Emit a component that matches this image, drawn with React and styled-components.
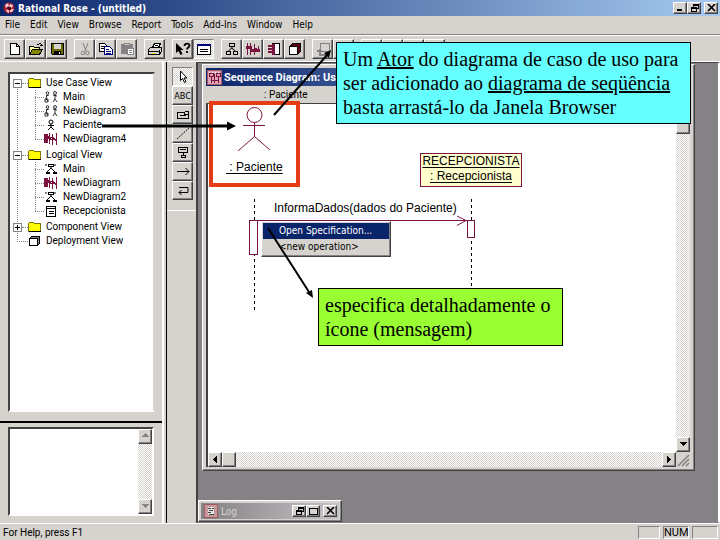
import styled, { createGlobalStyle, css } from 'styled-components';

const face = '#d6d3ce';
const shadow = '#848284';
const dark = '#424142';
const maroon = '#7b1340';
const ui = '"Roboto", "Liberation Sans", sans-serif';
const condensed = '"DejaVu Sans Condensed", "DejaVu Sans", sans-serif';

const GlobalStyle = createGlobalStyle`
    * {
        box-sizing: border-box;
    }

    body {
        margin: 0;
        background: ${face};
        font-family: ${ui};
        font-size: 10px;
        color: #000;
    }

    ul {
        list-style: none;
        margin: 0;
        padding: 0;
    }

    svg {
        display: block;
        flex: none;
    }
`;

const checker = css`
    background: repeating-conic-gradient(#fff 0 25%, ${face} 0 50%) 0 0 / 2px 2px;
`;

const raised = css`
    border: 1px solid;
    border-color: #fff ${dark} ${dark} #fff;
    box-shadow: inset -1px -1px 0 ${shadow};
`;

/* ---------- icons ---------- */

const Icon = ({ w = 16, h = 14, children, ...rest }) => (
    <svg width={w} height={h} viewBox={`0 0 ${w} ${h}`} fill="none" stroke="#000" shapeRendering="crispEdges" aria-hidden="true" {...rest}>
        {children}
    </svg>
);

const RoseIcon = () => (
    <Icon w={12} h={12} shapeRendering="auto" stroke="none">
        <circle cx="6" cy="6" r="5.500" fill="#a02030" />
        <path d="M2 3l3-2 1 3-3 2zM7 2l3 1-1 3-3-1zM7 7l4 0-2 3-2 0zM3 8l3-1 0 4-2-1z" fill="#f4c8cc" />
        <path d="M4 5h4v3H5z" fill="#5a0010" />
    </Icon>
);

const SequenceWindowIcon = () => (
    <Icon w={15} h={15} stroke={maroon}>
        <path d="M.5.500h14v14H.500z" fill="#dea6b5" stroke="#a55a63" />
        <path d="M2.500 3.500h4v3h-4zM9.500 3.500h4v3h-4zM4.500 7v6M11.500 7v6M4 10.500h8M7.500 4v9" />
        <path d="M2 2.500h11" stroke="#fff" strokeDasharray="1 2" />
    </Icon>
);

const toolIcons = {
    new: <Icon><path d="M3.500 1.500h6l3 3v8h-9zM9.500 1.500v3h3" fill="#fff" /></Icon>,
    open: (
        <Icon>
            <path d="M1.500 12V4.500h4l1 1h5V7" fill="#ffff9c" />
            <path d="M1.500 12.500l3-5h10l-3 5z" fill="#848200" />
            <path d="M9 2.500h2M11 1.500h2M13.500 2v2M12 3.500h3" />
        </Icon>
    ),
    save: (
        <Icon>
            <path d="M2.500 1.500h12v11h-11l-1-1z" fill="#6b6900" />
            <path d="M5 2h7v5H5z" fill={face} stroke="none" />
            <path d="M5 9h7v4H5z" fill="#000" stroke="none" />
            <path d="M10 10h1v2h-1z" fill="#fff" stroke="none" />
        </Icon>
    ),
    cut: (
        <Icon stroke={shadow} shapeRendering="auto">
            <path d="M6 1l3 8M11 1l-3 8" />
            <circle cx="6" cy="11" r="1.800" />
            <circle cx="10.500" cy="11" r="1.800" />
        </Icon>
    ),
    copy: (
        <Icon>
            <path d="M1.500 1.500h5l2 2v6h-7z" fill="#fff" />
            <path d="M3 4.500h3M3 6.500h4" />
            <path d="M6.500 4.500h5l3 3v5h-8z" fill="#fff" stroke="#00007b" />
            <path d="M8 7.500h3M8 9.500h5M8 11.500h5" stroke="#00007b" />
        </Icon>
    ),
    paste: (
        <Icon stroke={shadow}>
            <path d="M2.500 2.500h11v9h-11z" fill={shadow} />
            <path d="M5.500 1.500h5v2h-5z" fill={face} />
            <path d="M8.500 6.500h6v6h-6z" fill="#fff" />
            <path d="M10 8.500h3M10 10.500h3" />
        </Icon>
    ),
    print: (
        <Icon>
            <path d="M5.500 5.500l2-4h6l-2 4z" fill="#fff" />
            <path d="M1.500 7.500l2-2h11v4l-2 3h-11z" fill={face} />
            <path d="M2 9.500h10M12.500 12V8M8 3.500h3" />
            <path d="M5 11h3" stroke="#ffff00" />
        </Icon>
    ),
    help: (
        <Icon shapeRendering="auto">
            <path d="M1 1v10l2.500-2 2 4 2-1-2-4h3z" fill="#000" stroke="none" />
            <path d="M9.500 4c0-3 5-3 5-.500 0 2-2.500 2-2.500 4M12 9v2" strokeWidth="1.800" />
        </Icon>
    ),
    docs: (
        <Icon>
            <path d="M1.500 2.500h13v10h-13z" fill="#fff" />
            <path d="M1 3.500h14M1 2.500h14" stroke="#00007b" />
            <path d="M4 7.500h8M4 9.500h8" />
        </Icon>
    ),
    classes: (
        <Icon>
            <path d="M5.500 1.500h5v3h-5zM2.500 9.500h4v3h-4zM9.500 9.500h4v3h-4z" />
            <path d="M8 5v2M4.500 9l3-3 4 3" shapeRendering="auto" />
        </Icon>
    ),
    interaction: (
        <Icon stroke={maroon}>
            <path d="M2.500 1v12M5.500 1v12M9.500 2v11M13.500 4v6" />
            <path d="M1 5h6M6 8h9M10 6v4" strokeWidth="3" />
        </Icon>
    ),
    component: (
        <Icon>
            <path d="M6.500 1.500h7v11h-7z" fill="#fff" />
            <path d="M6 2h3v11H6z" fill={maroon} stroke="none" />
            <path d="M2.500 3.500h5v1h-5zM2.500 6.500h5v1h-5zM2.500 9.500h5v1h-5z" fill="#fff" stroke={maroon} />
        </Icon>
    ),
    deployment: (
        <Icon>
            <path d="M2.500 4.500l3-3h8v8l-3 3z" fill="#5a0010" />
            <path d="M2.500 4.500h8v8h-8z" fill="#fff" />
        </Icon>
    ),
    parent: (
        <Icon stroke={shadow}>
            <path d="M5.500 1.500h9v8h-9z" />
            <path d="M4.500 12V7M2 8.500h5M4 12.500h7v-2" strokeWidth="2" />
        </Icon>
    ),
    previous: <Icon><path d="M3 1.500h10M3.500 1v10M13.500 1v10" strokeWidth="2" /></Icon>,
    zoom: <Icon stroke={shadow}><path d="M5 2.500h5M4.500 3v5M10.500 3v5" /></Icon>,
    fit: <Icon><path d="M3 2.500h10v9H3z" /></Icon>,
};

const paletteIcons = {
    select: <Icon w={14} h={13}><path d="M4.500 1v9.500l2-2 2 4 1.500-1-2-3.500h3z" fill="#fff" shapeRendering="auto" /></Icon>,
    note: <Icon w={14} h={13}><path d="M1.500 4.500h7l1-1h3v7h-11zM4 7.500h6M8.500 4.500v2h3" /></Icon>,
    anchor: <Icon w={14} h={13}><path d="M1 12L13 1" strokeDasharray="2 1" shapeRendering="auto" /></Icon>,
    object: <Icon w={14} h={13}><path d="M2.500 1.500h9v5h-9zM4 3.500h6M7.500 7v2M5.500 9.500h4v2h-4z" /></Icon>,
    message: <Icon w={14} h={13}><path d="M1 6.500h12M9.500 3l3.500 3.500-3.500 3.500" shapeRendering="auto" /></Icon>,
    self: <Icon w={14} h={13}><path d="M3 3.500h9v5H3M5.500 6L3 8.500 5.500 11" shapeRendering="auto" /></Icon>,
};

const treeIcons = {
    folder: (
        <Icon w={13} h={12} stroke="#7b7900">
            <path d="M.5 10.500v-8l1-1h4l1 1h6v8z" fill="#ffff00" />
            <path d="M1 10.500h12" stroke="#000" />
        </Icon>
    ),
    usecase: (
        <Icon w={14} h={12} shapeRendering="auto" strokeWidth=".8">
            <circle cx="3.500" cy="2" r="1.300" />
            <circle cx="11" cy="2" r="1.500" />
            <path d="M2 5l3-1M3 4L2 8l2 2M1 8h3v3H1zM9 4l4 1M11 4v4l-2 3M11 8l2 3" />
        </Icon>
    ),
    actor: (
        <Icon w={14} h={12} shapeRendering="auto">
            <circle cx="7" cy="3" r="2" />
            <path d="M4 6.500h6M7 5v3l-3 3M7 8l3 3" />
        </Icon>
    ),
    sequence: (
        <Icon w={14} h={12} stroke={maroon}>
            <path d="M0 1h4v9H0z" fill={maroon} stroke="none" />
            <path d="M5.500 0v11M8.500 1v11M12.500 0v12M1 4.500h8M6 6.500h7" />
            <path d="M4 4l3 3M9 5l4 3" strokeWidth="2" />
        </Icon>
    ),
    classes: (
        <Icon w={14} h={12}>
            <path d="M4.500 1.500h5v2h-5zM2.500 9.500h3v1h-3zM9.500 9.500h3v1h-3z" />
            <path d="M7 4v2M3 9l4-4 4 4M2 1v2M11 1v2" shapeRendering="auto" />
        </Icon>
    ),
    class: <Icon w={14} h={12}><path d="M2.500 1.500h9v10h-9zM2 3.500h10M5 6.500h5M5 8.500h5" fill="#fff" /></Icon>,
    deployment: (
        <Icon w={13} h={12}>
            <path d="M1.500 3.500l2-2h8v7l-2 2z" fill={shadow} />
            <path d="M1.500 3.500h8v7h-8z" fill="#fff" />
        </Icon>
    ),
};

const captionIcons = {
    min: <Icon w={9} h={8}><path d="M1 6h5" strokeWidth="2" /></Icon>,
    restore: <Icon w={9} h={8}><path d="M3.500 3V.500h5v4H6M3 1h6M1.500 3.500h5v4h-5zM1 4h6" /></Icon>,
    max: <Icon w={9} h={8}><path d="M.5 1.500h8v6h-8zM0 1h9" /></Icon>,
    close: <Icon w={9} h={8}><path d="M1 0l7 7M8 0L1 7" strokeWidth="1.600" shapeRendering="auto" /></Icon>,
};

/* ---------- window frame ---------- */

const Page = styled.div`
    position: relative;
    display: flex;
    flex-direction: column;
    min-height: 100vh;
    overflow: hidden;
`;

const TitleBar = styled.header`
    display: flex;
    align-items: center;
    gap: 3px;
    height: 16px;
    padding: 0 2px 0 3px;
    background: linear-gradient(90deg, ${(p) => (p.$inactive ? '#848284, #c6c3c6' : '#0a246a, #a6caf0')});
    color: ${(p) => (p.$inactive ? face : '#fff')};
    font-family: ${condensed};
    font-size: 10px;
    font-weight: ${(p) => (p.$inactive ? 400 : 700)};
    white-space: nowrap;

    ${(p) => p.$child && css`
        height: 18px;
        padding-left: 1px;
        gap: 2px;
        font-family: ${ui};
        font-size: 11px;
    `}
`;

const Caption = styled.h1`
    flex: 1;
    margin: 0;
    font: inherit;
`;

const CaptionButton = styled.button`
    ${raised}
    display: grid;
    place-items: center;
    width: 14px;
    height: 12px;
    margin: 0 0 0 ${(p) => (p.$apart ? '0' : '-3px')};
    padding: 0;
    background: ${face};
`;

const MenuBar = styled.nav`
    display: flex;
    gap: 10px;
    height: 19px;
    padding-left: 5px;
    border-bottom: 1px solid ${shadow};
`;

const MenuItem = styled.button`
    padding: 0;
    border: 0;
    background: none;
    font: 10px/16px ${condensed};
`;

const ToolBar = styled.div`
    display: flex;
    align-items: center;
    gap: 7px;
    height: 27px;
    padding-left: 4px;
    border-top: 1px solid #fff;
    border-bottom: 1px solid #fff;
`;

const ToolGroup = styled.div`
    display: flex;
`;

const ToolButton = styled.button`
    ${raised}
    display: grid;
    place-items: center;
    width: 21px;
    height: ${(p) => (p.$palette ? '19px' : '20px')};
    padding: 0;
    background: ${face};
    font: 9px ${condensed};

    ${(p) => p.$pressed && css`
        ${checker}
        border-color: ${shadow} #fff #fff ${shadow};
        box-shadow: none;
    `}
`;

const Workspace = styled.main`
    flex: 1;
    display: flex;
`;

const StatusBar = styled.footer`
    display: flex;
    align-items: center;
    gap: 3px;
    height: 17px;
    padding: 0 2px 0 3px;
    border-top: 1px solid #fff;
    font-size: 10px;
`;

const StatusText = styled.span`
    flex: 1;
`;

const StatusPane = styled.span`
    width: ${(p) => p.$width}px;
    height: 13px;
    border: 1px solid;
    border-color: ${shadow} #fff #fff ${shadow};
    font-size: 11px;
    line-height: 12px;
    text-align: center;
`;

/* ---------- browser side ---------- */

const Side = styled.aside`
    display: flex;
    flex-direction: column;
    width: 167px;
    border-right: 1px solid #000;
    box-shadow: inset -2px 0 0 ${face}, inset -4px 0 0 #fff;
`;

const Sunken = styled.div`
    border: 2px solid;
    border-color: ${dark} #fff #fff ${dark};
    background: #fff;
`;

const BrowserPane = styled.section`
    flex: 1;
    display: flex;
    padding: 10px 7px 9px 8px;
    border-bottom: 2px solid #000;
    margin-right: 4px;
`;

const TreeBox = styled(Sunken)`
    flex: 1;
    padding-top: 2px;
    border-right-color: ${face};
    font-size: 10px;
`;

const dots = 'repeating-linear-gradient(#848284 0 1px, transparent 1px 2px)';

const Tree = styled.ul`
    display: flex;
    flex-direction: column;
    gap: 2px;
    background: ${dots} 7px 7px / 1px calc(100% - 14px) no-repeat;
`;

const Branch = styled.ul`
    padding-left: 25px;
    background: ${dots} 25px 0 / 1px calc(100% - 7px) no-repeat;
`;

const TreeRow = styled.div`
    display: flex;
    align-items: center;
    height: 14px;
    padding-left: ${(p) => p.$indent || 0}px;
    line-height: 14px;
    white-space: nowrap;
`;

const Leader = styled.span`
    flex: none;
    width: ${(p) => p.$width}px;
    border-top: 1px dotted ${shadow};
`;

const TreeLabel = styled.span`
    padding-left: 5px;
`;

const Expander = styled.button`
    flex: none;
    display: block;
    width: 9px;
    height: 9px;
    padding: 0;
    border: 1px solid ${shadow};
    background: #fff;
`;

const DocPane = styled.section`
    padding: 4px 12px 7px 8px;
`;

const DocBox = styled(Sunken)`
    display: flex;
    height: 89px;
`;

const DocText = styled.textarea`
    flex: 1;
    min-width: 0;
    border: 0;
    padding: 2px;
    resize: none;
    overflow: hidden;
    outline: none;
    font: inherit;
`;

const Track = styled.div`
    ${checker}
    display: flex;
    flex-direction: ${(p) => (p.$across ? 'row' : 'column')};
    flex: ${(p) => (p.$across ? '1' : 'none')};
`;

const ScrollButton = styled.button`
    ${raised}
    display: grid;
    place-items: center;
    width: 14px;
    height: 15px;
    padding: 0;
    background: ${face};
    ${(p) => p.$end && (p.$across ? 'margin-left: auto;' : 'margin-top: auto;')}
`;

const Thumb = styled.div`
    ${raised}
    width: 14px;
    height: 15px;
    background: ${face};
`;

const PaletteColumn = styled.div`
    width: 29px;
`;

const Palette = styled.div`
    display: flex;
    flex-direction: column;
    padding: 5px 4px 10px 5px;
    border-bottom: 1px solid #fff;
`;

/* ---------- mdi area ---------- */

const Desktop = styled.section`
    position: relative;
    flex: 1;
    min-width: 0;
    background: ${shadow};
    border: solid;
    border-width: 1px 2px 1px 2px;
    border-color: ${dark} #fff ${shadow} ${dark};
`;

const ChildWindow = styled.article`
    position: absolute;
    inset: 1px 23px 51px 4px;
    display: flex;
    flex-direction: column;
    padding: 3px 4px 3px 3px;
    ${raised}
    background: ${face};
`;

const ObjectStrip = styled.div`
    height: 18px;
    padding-left: 58px;
    line-height: 18px;
    border-bottom: 1px solid ${dark};
`;

const CanvasRow = styled.div`
    flex: 1;
    display: flex;
    border-left: 2px solid ${dark};
`;

const Canvas = styled.div`
    position: relative;
    flex: 1;
    overflow: hidden;
    background: #fff;
    font: 12px/14px "Liberation Sans", sans-serif;
`;

const BottomRow = styled.div`
    display: flex;
    border-left: 2px solid ${dark};
`;

const Label = styled.span`
    position: absolute;
    left: ${(p) => p.$x}px;
    top: ${(p) => p.$y}px;
    white-space: pre;
    text-decoration: ${(p) => (p.$underline ? 'underline' : 'none')};
    text-underline-offset: 2px;
`;

const ObjectBox = styled.div`
    position: absolute;
    left: 212px;
    top: 49px;
    width: 102px;
    height: 34px;
    border: 1px solid ${maroon};
    background: #ffffce;
    line-height: 15px;
    text-align: center;
    text-decoration: underline;
    text-underline-offset: 2px;
    white-space: nowrap;
`;

const Lines = styled.svg`
    position: absolute;
    left: 0;
    top: 0;
`;

const ContextMenu = styled.div`
    position: absolute;
    left: 53px;
    top: 117px;
    display: flex;
    flex-direction: column;
    width: 130px;
    padding: 1px;
    ${raised}
    background: ${face};
`;

const ContextItem = styled.button`
    height: 16px;
    padding: 0 0 0 16px;
    border: 0;
    background: ${(p) => (p.$active ? '#0a246a' : 'none')};
    color: ${(p) => (p.$active ? '#fff' : '#000')};
    font: 10px/16px ${condensed};
    text-align: left;
`;

const LogWindow = styled.article`
    position: absolute;
    left: 0;
    bottom: 0;
    width: 144px;
    padding: 2px;
    ${raised}
    background: ${face};
`;

/* ---------- notes drawn over the screen ---------- */

const Note = styled.p`
    position: absolute;
    left: ${(p) => p.$x}px;
    top: ${(p) => p.$y}px;
    margin: 0;
    padding: 4px 12px 4px 6px;
    border: 1px solid #000;
    background: ${(p) => p.$color};
    font: 20px/24px "Liberation Serif", serif;
    white-space: nowrap;
`;

const Highlight = styled.div`
    position: absolute;
    left: 209px;
    top: 101px;
    width: 91px;
    height: 86px;
    border: 4px solid #e63c14;
`;

const toolGroups = [
    ['new', 'open', 'save'],
    ['cut', 'copy', 'paste'],
    ['print'],
    ['help', 'docs'],
    ['classes', 'interaction', 'component', 'deployment'],
    ['parent', 'previous'],
    ['zoom', 'zoom', 'fit', 'fit'],
];

const menus = ['File', 'Edit', 'View', 'Browse', 'Report', 'Tools', 'Add-Ins', 'Window', 'Help'];

const tree = [
    {
        name: 'Use Case View',
        icon: 'folder',
        open: true,
        items: [
            ['Main', 'usecase'],
            ['NewDiagram3', 'usecase'],
            ['Paciente', 'actor'],
            ['NewDiagram4', 'sequence'],
        ],
    },
    {
        name: 'Logical View',
        icon: 'folder',
        open: true,
        items: [
            ['Main', 'classes'],
            ['NewDiagram', 'sequence'],
            ['NewDiagram2', 'classes'],
            ['Recepcionista', 'class'],
        ],
    },
];

const closedNodes = [
    { name: 'Component View', icon: 'folder', open: false },
    { name: 'Deployment View', icon: 'deployment' },
];

const arrowPaths = {
    up: 'M0 4h7L3.500 0z',
    down: 'M0 1h7L3.500 5z',
    left: 'M5 0v7L1 3.500z',
    right: 'M1 0v7l4-3.500z',
};

function Scroll({ dir, off }) {
    return (
        <ScrollButton type="button" aria-label={dir} $end={dir === 'down' || dir === 'right'} $across={dir === 'left' || dir === 'right'}>
            <Icon w={7} h={7} stroke="none" fill={off ? shadow : '#000'}>
                <path d={arrowPaths[dir]} />
            </Icon>
        </ScrollButton>
    );
}

function Node({ node }) {
    const leaf = node.open === undefined;

    return (
        <TreeRow $indent={leaf ? 7 : 3}>
            {!leaf && (
                <Expander type="button" aria-label={node.name} aria-expanded={node.open}>
                    <Icon w={7} h={7}>
                        <path d={node.open ? 'M1 3.500h5' : 'M1 3.500h5M3.500 1v5'} />
                    </Icon>
                </Expander>
            )}
            <Leader $width={leaf ? 11 : 6} />
            {treeIcons[node.icon]}
            <TreeLabel>{node.name}</TreeLabel>
        </TreeRow>
    );
}

function Browser() {
    return (
        <Side>
            <BrowserPane>
                <TreeBox>
                    <Tree>
                        {tree.map((node) => (
                            <li key={node.name}>
                                <Node node={node} />
                                <Branch>
                                    {node.items.map(([name, icon]) => (
                                        <li key={name}>
                                            <TreeRow>
                                                <Leader $width={9} />
                                                {treeIcons[icon]}
                                                <TreeLabel>{name}</TreeLabel>
                                            </TreeRow>
                                        </li>
                                    ))}
                                </Branch>
                            </li>
                        ))}
                        <li>
                            {closedNodes.map((node) => <Node key={node.name} node={node} />)}
                        </li>
                    </Tree>
                </TreeBox>
            </BrowserPane>
            <DocPane>
                <DocBox>
                    <DocText aria-label="Documentation" />
                    <Track>
                        <Scroll dir="up" off />
                        <Scroll dir="down" off />
                    </Track>
                </DocBox>
            </DocPane>
        </Side>
    );
}

function Diagram() {
    return (
        <Canvas>
            <Lines width="300" height="220" fill="none" stroke={maroon} aria-hidden="true">
                <circle cx="46.500" cy="11" r="7.500" />
                <path d="M46.500 19v14M35 21.500h22M46.500 32.500L30 47M46.500 32.500L62 46" />
                <g shapeRendering="crispEdges">
                    <path d="M46.500 95v112M263.500 95v112" stroke="#000" strokeDasharray="3 3" />
                    <path d="M41.500 116.500h8v34h-8zM259.500 116.500h7v17h-7z" fill="#fff" />
                    <path d="M42 116.500h217" />
                </g>
                <path d="M249 112l9 4.500-9 5" />
            </Lines>
            <Label $x={18} $y={56} $underline>{' : Paciente'}</Label>
            <ObjectBox>RECEPCIONISTA<br />: Recepcionista</ObjectBox>
            <Label $x={66} $y={97}>InformaDados(dados do Paciente)</Label>
            <ContextMenu role="menu">
                <ContextItem type="button" role="menuitem" $active>Open Specification...</ContextItem>
                <ContextItem type="button" role="menuitem">&lt;new operation&gt;</ContextItem>
            </ContextMenu>
        </Canvas>
    );
}

export default function App() {
    return (
        <Page>
            <GlobalStyle />
            <TitleBar>
                <RoseIcon />
                <Caption>Rational Rose - (untitled)</Caption>
                <CaptionButton type="button" aria-label="Minimize" $apart>{captionIcons.min}</CaptionButton>
                <CaptionButton type="button" aria-label="Restore">{captionIcons.restore}</CaptionButton>
                <CaptionButton type="button" aria-label="Close" $apart>{captionIcons.close}</CaptionButton>
            </TitleBar>
            <MenuBar>
                {menus.map((name) => <MenuItem key={name} type="button">{name}</MenuItem>)}
            </MenuBar>
            <ToolBar role="toolbar">
                {toolGroups.map((group, i) => (
                    <ToolGroup key={i}>
                        {group.map((name, j) => (
                            <ToolButton key={j} type="button" aria-label={name} $pressed={name === 'docs'}>
                                {toolIcons[name]}
                            </ToolButton>
                        ))}
                    </ToolGroup>
                ))}
            </ToolBar>

            <Workspace>
                <Browser />
                <PaletteColumn>
                    <Palette>
                        <ToolButton type="button" aria-label="select" $palette $pressed>{paletteIcons.select}</ToolButton>
                        <ToolButton type="button" $palette>ABC</ToolButton>
                        {['note', 'anchor', 'object', 'message', 'self'].map((name) => (
                            <ToolButton key={name} type="button" aria-label={name} $palette>
                                {paletteIcons[name]}
                            </ToolButton>
                        ))}
                    </Palette>
                </PaletteColumn>
                <Desktop>
                    <ChildWindow>
                        <TitleBar $child>
                            <SequenceWindowIcon />
                            <Caption as="h2">Sequence Diagram: Us</Caption>
                        </TitleBar>
                        <ObjectStrip>: Paciente</ObjectStrip>
                        <CanvasRow>
                            <Diagram />
                            <Track>
                                <Scroll dir="up" />
                                <Thumb />
                                <Scroll dir="down" />
                            </Track>
                        </CanvasRow>
                        <BottomRow>
                            <Track $across>
                                <Scroll dir="left" />
                                <Thumb />
                                <Scroll dir="right" />
                            </Track>
                            <Icon w={14} h={15} stroke={shadow} shapeRendering="auto">
                                <path d="M2 14L13 3M6 14l7-7M10 14l3-3" strokeWidth="1.500" />
                            </Icon>
                        </BottomRow>
                    </ChildWindow>
                    <LogWindow>
                        <TitleBar $inactive>
                            <Icon w={14} h={14} stroke="#a55a63">
                                <path d="M.5.500h13v13H.500z" fill="#c69a9c" />
                                <path d="M4 3h6v8H4z" fill="#e7e3e7" stroke="none" />
                                <path d="M4 4.500h3M8 4.500h2M5 6.500h4M4 8.500h3M5 10.500h5" stroke={dark} />
                            </Icon>
                            <Caption as="h2">Log</Caption>
                            <CaptionButton type="button" aria-label="Restore log" $apart>{captionIcons.restore}</CaptionButton>
                            <CaptionButton type="button" aria-label="Maximize log">{captionIcons.max}</CaptionButton>
                            <CaptionButton type="button" aria-label="Close log" $apart>{captionIcons.close}</CaptionButton>
                        </TitleBar>
                    </LogWindow>
                </Desktop>
            </Workspace>

            <StatusBar>
                <StatusText>For Help, press F1</StatusText>
                <StatusPane $width={22} />
                <StatusPane $width={26}>NUM</StatusPane>
                <StatusPane $width={26} />
            </StatusBar>

            <Highlight />
            <Note $x={336} $y={42} $color="#66ffff">
                Um <u>Ator</u> do diagrama de caso de uso para<br />
                ser adicionado ao <u>diagrama de seqüência</u><br />
                basta arrastá-lo da Janela Browser
            </Note>
            <Note $x={318} $y={288} $color="#99ff33">
                especifica detalhadamente o<br />
                ícone (mensagem)
            </Note>
            <Lines width="400" height="320" stroke="#000" aria-hidden="true" pointerEvents="none">
                <path d="M102 126h127" strokeWidth="3" />
                <path d="M227 121.500l9 4.500-9 4.500z" stroke="none" />
                <path d="M274 115l54-61M268 228l41 64" strokeWidth="2" />
                <path d="M331 50l-7 3 5 5zM313 298l-7-5 6-3z" stroke="none" />
            </Lines>
        </Page>
    );
}
